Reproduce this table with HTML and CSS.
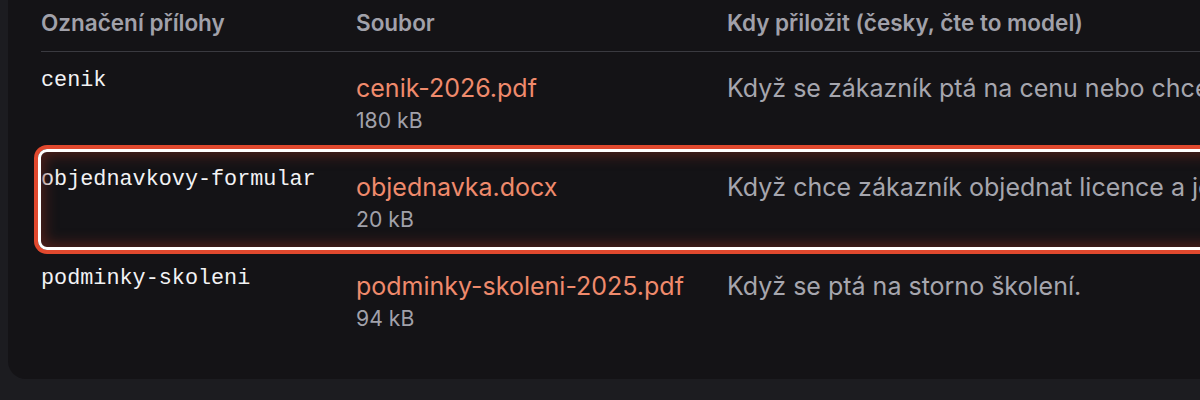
FILE: index.html
```html
<!DOCTYPE html>
<html lang="cs">
<head>
<meta charset="utf-8">
<link rel="stylesheet" href="styles.css">
</head>
<body>
<div class="page">
  <div class="card">
    <div class="table">
      <div class="row head">
        <div class="cell">Označení přílohy</div>
        <div class="cell">Soubor</div>
        <div class="cell">Kdy přiložit (česky, čte to model)</div>
      </div>
      <div class="row">
        <div class="cell key">cenik</div>
        <div class="cell file"><a class="link">cenik-2026.pdf</a><span class="size">180 kB</span></div>
        <div class="cell desc">Když se zákazník ptá na cenu nebo chce nabídku.</div>
      </div>
      <div class="row active">
        <div class="cell key">objednavkovy-formular</div>
        <div class="cell file"><a class="link">objednavka.docx</a><span class="size">20 kB</span></div>
        <div class="cell desc">Když chce zákazník objednat licence a je připraven.</div>
      </div>
      <div class="row">
        <div class="cell key">podminky-skoleni</div>
        <div class="cell file"><a class="link">podminky-skoleni-2025.pdf</a><span class="size">94 kB</span></div>
        <div class="cell desc">Když se ptá na storno školení.</div>
      </div>
    </div>
  </div>
</div>
</body>
</html>
```
FILE: styles.css
```css
* { box-sizing: border-box; }
html, body { margin: 0; padding: 0; }
body {
  background: #1c1c20;
  font-family: Inter, "Noto Sans", sans-serif;
  overflow: hidden;
}
.page {
  width: 1200px;
  height: 400px;
  overflow: hidden;
  padding-left: 8px;
}
.card {
  width: 1500px;
  margin-top: -20px;
  padding: 20px 0 30px 33px;
  background: #141316;
  border-radius: 18px;
}
.row {
  display: grid;
  grid-template-columns: 315px 371px 1fr;
  padding: 13px 0 17px;
  position: relative;
}
.head {
  padding: 8px 0 13px;
  border-bottom: 1px solid #3a3a40;
}
.head .cell {
  font-size: 22.5px;
  font-weight: 600;
  line-height: 30px;
  color: #a1a1aa;
}
.cell { white-space: nowrap; }
.key {
  font-family: "Liberation Mono", "DejaVu Sans Mono", monospace;
  font-size: 21.8px;
  line-height: 32px;
  color: #f2f2f4;
}
.file {
  display: flex;
  flex-direction: column;
  padding-top: 6px;
}
.link {
  font-size: 25px;
  line-height: 34px;
  color: #ef8a6c;
  text-decoration: none;
}
.size {
  font-size: 21.2px;
  line-height: 28px;
  margin-top: 1px;
  color: #a1a1aa;
}
.desc {
  padding-top: 6px;
  font-size: 25px;
  line-height: 34px;
  color: #a6a6ae;
}
.active::after {
  content: "";
  position: absolute;
  top: -2px;
  bottom: 0;
  left: -3px;
  right: -40px;
  border: 3px solid #ffffff;
  border-radius: 9px;
  box-shadow: 0 0 0 4px #e1492e, inset 0 0 14px 3px rgba(110, 38, 28, 0.7);
  pointer-events: none;
}
```
